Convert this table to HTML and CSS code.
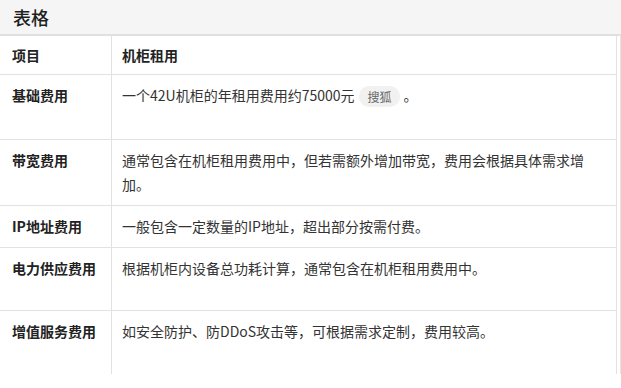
FILE: index.html
```html
<!DOCTYPE html>
<html lang="zh-CN">
<head>
<meta charset="utf-8">
<title>表格</title>
<link rel="stylesheet" href="styles.css">
</head>
<body>
<div class="panel">
  <div class="title-bar">表格</div>
  <div class="table-wrap">
    <div class="table">
      <div class="cell head key">项目</div>
      <div class="cell head val">机柜租用</div>

      <div class="cell key tall">基础费用</div>
      <div class="cell val tall">一个42U机柜的年租用费用约75000元<span class="badge">搜狐</span>。</div>

      <div class="cell key">带宽费用</div>
      <div class="cell val">通常包含在机柜租用费用中，但若需额外增加带宽，费用会根据具体需求增加。</div>

      <div class="cell key">IP地址费用</div>
      <div class="cell val">一般包含一定数量的IP地址，超出部分按需付费。</div>

      <div class="cell key mid">电力供应费用</div>
      <div class="cell val mid">根据机柜内设备总功耗计算，通常包含在机柜租用费用中。</div>

      <div class="cell key mid last">增值服务费用</div>
      <div class="cell val mid last">如安全防护、防DDoS攻击等，可根据需求定制，费用较高。</div>
    </div>
  </div>
</div>
</body>
</html>
```

FILE: styles.css
```css
* {
  box-sizing: border-box;
}

html, body {
  margin: 0;
  padding: 0;
  background: #ffffff;
}

body {
  font-family: "Noto Sans CJK SC", "Noto Sans", sans-serif;
  color: #333333;
  width: 621px;
  height: 388px;
  overflow: hidden;
}

.panel {
  display: flex;
  flex-direction: column;
}

.title-bar {
  height: 36px;
  background: #f5f5f5;
  border-bottom: 2px solid #e0e0e0;
  padding: 3px 13px 0;
  font-size: 18px;
  line-height: 28px;
  color: #1f1f1f;
  font-weight: 500;
}

.table-wrap {
  display: flex;
  border-right: 1px solid #e4e4e4;
  width: 621px;
}

.table {
  display: grid;
  grid-template-columns: 112px 505px;
}

.cell {
  font-size: 14px;
  line-height: 24px;
  padding: 8px 12px 9px;
  border-bottom: 1px solid #e2e2e2;
}

.key {
  border-right: 1px solid #e2e2e2;
  font-weight: 700;
  color: #222222;
}

.val {
  border-right: 1px solid #e2e2e2;
  padding-left: 10px;
  padding-right: 10px;
  color: #333333;
}

.head {
  padding-top: 7px;
  padding-bottom: 7px;
  font-weight: 700;
  color: #222222;
}

.tall {
  min-height: 65px;
}

.mid {
  min-height: 63px;
}

.last {
  border-bottom: none;
}

.badge {
  display: inline-block;
  vertical-align: middle;
  margin: -2px 4px 0 5px;
  padding: 0 8px;
  height: 21px;
  line-height: 21px;
  border-radius: 10px;
  background: #f1f1f1;
  color: #666666;
  font-size: 12px;
}
```
